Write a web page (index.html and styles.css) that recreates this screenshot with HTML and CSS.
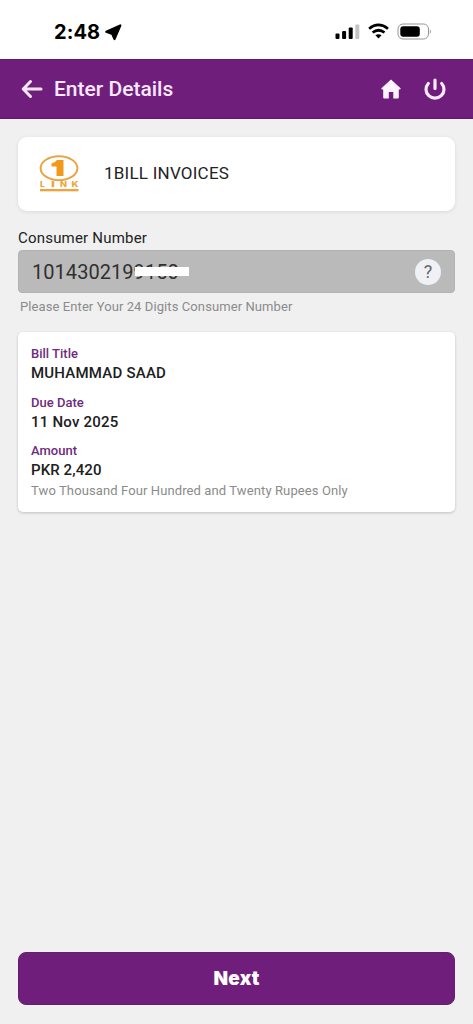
FILE: index.html
```html
<!DOCTYPE html>
<html lang="en">
<head>
<meta charset="utf-8">
<title>Enter Details</title>
<link rel="stylesheet" href="styles.css">
</head>
<body>
<div class="screen">
  <div class="status">
    <span class="clock">2:48</span>
    <svg class="location" width="17" height="17" viewBox="0 0 17 17"><path d="M15.300 1.500 9.500 15 7.300 10 1.300 7.800Z" fill="#000" stroke="#000" stroke-width="2.200" stroke-linejoin="round"/></svg>
    <svg class="indicators" width="98" height="18" viewBox="0 0 98 18">
      <rect x="1.500" y="10.500" width="4" height="5.500" rx="1"/>
      <rect x="8.100" y="8" width="4" height="8" rx="1"/>
      <rect x="14.700" y="4.500" width="4" height="11.500" rx="1"/>
      <rect x="21.300" y="1.500" width="4" height="14.500" rx="1" fill="#c4c4c4"/>
      <g fill="none" stroke="#000" stroke-width="2.700"><path d="M35.100 5.700Q44.300-1.800 54 5.700"/><path d="M38.600 9.500Q44.500 5 50.500 9.500"/></g>
      <path d="M41.400 12.300Q44.500 10.200 47.600 12.300L44.500 15.500Z"/>
      <rect x="64" y="1" width="30.500" height="15" rx="5" fill="#fff" stroke="#969696"/>
      <rect x="66.300" y="3.300" width="19.500" height="10.400" rx="3"/>
      <path d="M95.800 6.200Q98 8.500 95.800 11Z" fill="#999"/>
    </svg>
  </div>
  <header class="bar">
    <svg width="22" height="20" viewBox="0 0 22 20" fill="none" stroke="#fbe8ff" stroke-width="3" stroke-linecap="round" stroke-linejoin="round"><path d="M9.500 2.500 2.200 10l7.300 7.500M2.500 10H20"/></svg>
    <h1 class="title">Enter Details</h1>
    <svg class="home" width="20" height="20" viewBox="0 0 20 20"><path d="M10 .5 19.600 9.200Q20 10.400 18.500 10.400H17.800V18.500Q17.800 19.500 16.800 19.500H12.300V13H7.800V19.500H3.200Q2.200 19.500 2.200 18.500V10.400H1.500Q0 10.400.4 9.200Z" fill="#fff3ff"/></svg>
    <svg class="power" width="22" height="22" viewBox="0 0 22 22" fill="none" stroke="#fdeaff" stroke-width="3.200" stroke-linecap="round"><path d="M11 2V10.500M4.300 5.500A9 8.800 0 1 0 17.700 5.500"/></svg>
  </header>
  <main class="content">
    <section class="card biller">
      <svg width="42" height="40" viewBox="0 0 42 40">
        <ellipse cx="21" cy="14.200" rx="18.400" ry="12" fill="#fff" stroke="#e9a545" stroke-width="2"/>
        <path d="M13.500 9.500Q17 9 19 6H25.500V22H18.500V12.500H13.500Z" fill="#f09a1c"/>
        <g class="logo-name"><text x="2" y="33" textLength="5" lengthAdjust="spacingAndGlyphs">L</text><text x="13" y="33" textLength="4" lengthAdjust="spacingAndGlyphs">I</text><text x="22" y="33" textLength="7" lengthAdjust="spacingAndGlyphs">N</text><text x="33.500" y="33" textLength="7" lengthAdjust="spacingAndGlyphs">K</text></g>
        <rect x="2" y="35" width="38.500" height="2.300" fill="#efa33a"/>
      </svg>
      <span class="biller-name">1BILL INVOICES</span>
    </section>
    <div class="label">Consumer Number</div>
    <div class="field"><span class="number">1014302199150<i class="redaction"></i></span><span class="help">?</span></div>
    <div class="hint">Please Enter Your 24 Digits Consumer Number</div>
    <section class="card details">
      <div class="key bill">Bill Title</div>
      <div class="value person">MUHAMMAD SAAD</div>
      <div class="key due">Due Date</div>
      <div class="value date">11 Nov 2025</div>
      <div class="key amount">Amount</div>
      <div class="value price">PKR 2,420</div>
      <div class="words">Two Thousand Four Hundred and Twenty Rupees Only</div>
    </section>
    <button class="next">Next</button>
  </main>
</div>
</body>
</html>
```
FILE: styles.css
```css
* { box-sizing: border-box; }
body { margin: 0; font-family: Roboto, sans-serif; background: #f0f0f0; color: #222; }
.screen { height: 1024px; display: flex; flex-direction: column; }
.status { height: 59px; background: #fff; display: flex; align-items: center; padding: 5px 41px 0 54px; }
.clock { font: 700 20px/24px Inter, sans-serif; color: #000; letter-spacing: .1px; width: 51px; }
.indicators { margin-left: auto; }
.bar { height: 60px; background: #701e7b; border-top: 1px solid #5c2168; border-bottom: 1px solid #5a1a65; display: flex; align-items: center; padding: 0 27px 0 21px; }
.title { margin: 0 0 0 11px; font-size: 21px; line-height: 24px; font-weight: 500; color: #fbe8ff; }
.home { margin-left: auto; }
.power { margin-left: 23px; }
.content { flex: 1; display: flex; flex-direction: column; padding: 18px 18px 19px; }
.card { background: #fff; box-shadow: 0 1px 3px rgba(0, 0, 0, .2); }
.biller { height: 74px; border-radius: 9px; display: flex; align-items: center; padding-left: 20px; box-shadow: 0 1px 4px rgba(0, 0, 0, .09); }
.biller-name { margin: -2px 0 0 24px; font-size: 17px; letter-spacing: .23px; }
.logo-name { font: 800 7px Inter, sans-serif; fill: #efa33a; }
.label { margin-top: 17px; font-size: 15px; line-height: 20px; height: 22px; letter-spacing: .2px; }
.field { height: 43px; background: #bababa; border: 1px solid #b3b3b3; border-radius: 4px; display: flex; align-items: center; justify-content: space-between; padding: 0 13px; }
.number { position: relative; font-size: 20px; line-height: 24px; color: #303030; letter-spacing: .05px; }
.redaction { position: absolute; left: 103px; top: 7px; width: 54px; height: 9px; background: #fff; }
.help { width: 26px; height: 26px; border-radius: 50%; background: #eff1f5; color: #666; font-size: 18px; line-height: 26px; text-align: center; }
.hint { margin: 5px 0 0 2px; font-size: 13px; line-height: 18px; color: #8b8b8b; letter-spacing: .09px; }
.details { height: 180px; margin-top: 16px; border-radius: 5px; padding: 13px; }
.key { font-size: 13px; line-height: 18px; font-weight: 500; color: #6e2b7c; }
.value { font-size: 15px; line-height: 20px; height: 30.500px; font-weight: 500; color: #202020; letter-spacing: .22px; }
.price { height: 20px; letter-spacing: .1px; }
.words { font-size: 13px; line-height: 21px; color: #8b8b8b; letter-spacing: .11px; }
.next { margin-top: auto; width: 100%; height: 53px; border: 1px solid #60236b; border-radius: 8px; background: #701e7b; color: #fff; font: 900 19px/24px Inter, sans-serif; letter-spacing: .2px; }
```
